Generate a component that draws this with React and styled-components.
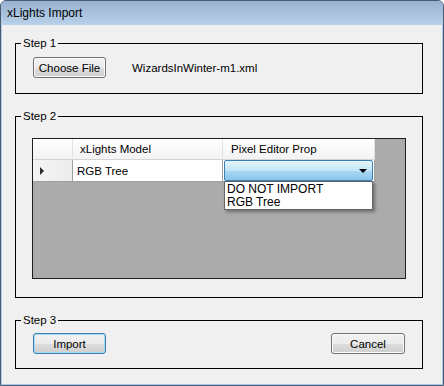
import React from "react";
import styled, { createGlobalStyle } from "styled-components";

const Global = createGlobalStyle`
  html, body { margin: 0; padding: 0; background: #ffffff; }
  body { font-family: "Liberation Sans", Arial, sans-serif; font-size: 11.5px; color: #000; }
`;

const Window = styled.div`
  width: 444px;
  height: 386px;
  box-sizing: border-box;
  display: flex;
  flex-direction: column;
  background: #a9c9ea;
  border: 1px solid #4a5c70;
  border-radius: 6px 6px 0 0;
  overflow: hidden;
`;

const TitleBar = styled.div`
  height: 24px;
  flex: none;
  display: flex;
  align-items: center;
  padding-left: 6px;
  font-size: 12px;
  background: linear-gradient(#98b1d0, #b9d1ea);
`;

const Client = styled.div`
  flex: 1;
  margin: 0 1px 1px;
  background: #f0f0f0;
  display: flex;
  flex-direction: column;
  padding-top: 11px;
  gap: 15px;
`;

const Group = styled.fieldset`
  box-sizing: border-box;
  margin: 0 0 0 13px;
  padding: 0;
  width: 408px;
  height: ${(p) => p.$h}px;
  border: 1px solid #000;
  min-width: 0;
`;

const Legend = styled.legend`
  margin-left: 5px;
  padding: 0 2px;
  line-height: 14px;
  font-size: 11.5px;
`;

const Body = styled.div`
  display: flex;
  align-items: center;
  justify-content: ${(p) => p.$justify || "flex-start"};
  padding: ${(p) => p.$pad};
  gap: ${(p) => p.$gap || 0}px;
`;

const Button = styled.button`
  box-sizing: border-box;
  width: ${(p) => p.$w}px;
  height: 21px;
  padding: 0;
  font-family: inherit;
  font-size: 11.5px;
  color: #000;
  border-radius: 3px;
  border: 1px solid ${(p) => (p.$focus ? "#3c7fb1" : "#707070")};
  box-shadow: inset 0 0 0 1px ${(p) => (p.$focus ? "#a6dbf7" : "#fcfcfc")};
  background: linear-gradient(#f2f2f2 0%, #ebebeb 50%, #dddddd 51%, #cfcfcf 100%);
`;

const FileName = styled.span`
  font-size: 11.5px;
`;

const Grid = styled.div`
  box-sizing: border-box;
  width: 374px;
  height: 141px;
  border: 1px solid #1e1e1e;
  background: #ababab;
`;

const Row = styled.div`
  display: grid;
  grid-template-columns: 40px 150px 152px;
  height: ${(p) => p.$h}px;
`;

const HeadCell = styled.div`
  box-sizing: border-box;
  display: flex;
  align-items: center;
  padding-left: ${(p) => p.$pl || 0}px;
  background: linear-gradient(#ffffff, #f3f3f3);
  border-right: 1px solid #dde3e8;
  border-bottom: 1px solid #d5d5d5;
  font-size: 11.5px;
`;

const RowHead = styled.div`
  box-sizing: border-box;
  display: flex;
  align-items: center;
  padding-left: 7px;
  background: linear-gradient(90deg, #f4f4f4, #ececec);
  border-right: 1px solid #a0a0a0;
  border-bottom: 1px solid #a0a0a0;
`;

const Arrow = styled.div`
  width: 0;
  height: 0;
  border-top: 4px solid transparent;
  border-bottom: 4px solid transparent;
  border-left: 4px solid #2a2a2a;
`;

const Cell = styled.div`
  position: relative;
  box-sizing: border-box;
  display: flex;
  align-items: center;
  padding: ${(p) => p.$pad || "0 0 0 4px"};
  background: #ffffff;
  border-right: 1px solid #a0a0a0;
  border-bottom: 1px solid #a0a0a0;
  font-size: 11.5px;
`;

const Combo = styled.div`
  box-sizing: border-box;
  width: 100%;
  height: 100%;
  display: flex;
  align-items: center;
  justify-content: flex-end;
  padding-right: 5px;
  border: 1px solid #3c7fb1;
  border-radius: 2px;
  background: linear-gradient(#e4f4fc 0%, #c4e5f7 50%, #a9d8f3 51%, #8cc5ea 100%);
`;

const DropArrow = styled.div`
  width: 0;
  height: 0;
  border-left: 4px solid transparent;
  border-right: 4px solid transparent;
  border-top: 4px solid #000;
`;

const DropList = styled.div`
  position: absolute;
  top: 100%;
  left: 1px;
  width: 149px;
  box-sizing: border-box;
  border: 1px solid #646464;
  background: #fff;
  box-shadow: 2px 2px 3px rgba(0, 0, 0, 0.35);
  padding: 1px 0 0 2px;
  z-index: 2;
`;

const Item = styled.div`
  line-height: 13px;
  font-size: 12px;
`;

export default function App() {
  return (
    <>
      <Global />
      <Window>
        <TitleBar>xLights Import</TitleBar>
        <Client>
          <Group $h={58}>
            <Legend>Step 1</Legend>
            <Body $pad="7px 0 0 17px" $gap={26}>
              <Button $w={73}>Choose File</Button>
              <FileName>WizardsInWinter-m1.xml</FileName>
            </Body>
          </Group>
          <Group $h={189}>
            <Legend>Step 2</Legend>
            <Body $pad="15px 0 0 16px">
              <Grid>
                <Row $h={21}>
                  <HeadCell />
                  <HeadCell $pl={7}>xLights Model</HeadCell>
                  <HeadCell $pl={8}>Pixel Editor Prop</HeadCell>
                </Row>
                <Row $h={22}>
                  <RowHead>
                    <Arrow />
                  </RowHead>
                  <Cell>RGB Tree</Cell>
                  <Cell $pad="0 1px 0 1px">
                    <Combo>
                      <DropArrow />
                    </Combo>
                    <DropList>
                      <Item>DO NOT IMPORT</Item>
                      <Item>RGB Tree</Item>
                    </DropList>
                  </Cell>
                </Row>
              </Grid>
            </Body>
          </Group>
          <Group $h={56}>
            <Legend>Step 3</Legend>
            <Body $pad="6px 17px 0 17px" $justify="space-between">
              <Button $w={73} $focus>Import</Button>
              <Button $w={74}>Cancel</Button>
            </Body>
          </Group>
        </Client>
      </Window>
    </>
  );
}
